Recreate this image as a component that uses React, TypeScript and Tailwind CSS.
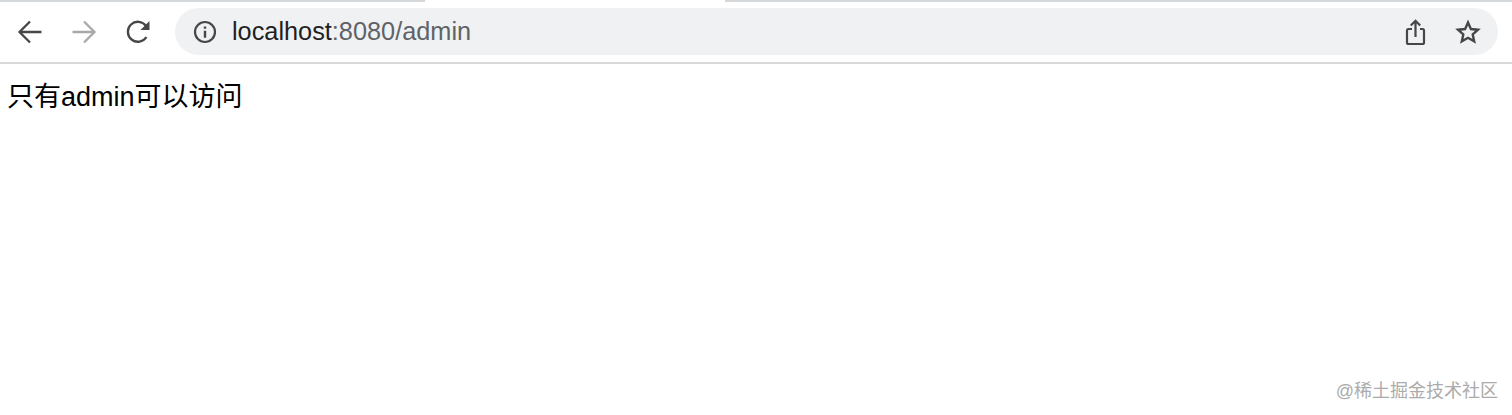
const FONT = "font-['Liberation_Sans','Noto_Sans_CJK_SC',sans-serif]";

export default function App() {
  return (
    <div className={`relative h-[415px] overflow-hidden bg-white ${FONT}`}>
      {/* tab strip remnant */}
      <div className="flex h-[2px]">
        <div className="w-[425px] bg-[#d6d9dc]" />
        <div className="w-[300px] bg-white" />
        <div className="flex-1 bg-[#d6d9dc]" />
      </div>

      {/* toolbar */}
      <div className="flex h-[62px] items-center border-b-[2px] border-[#d9d9d9] pb-[1px] pl-[17px] pr-[14px]">
        <svg width="26" height="26" viewBox="0 0 26 26" fill="none" stroke="#474747" strokeWidth="2.3">
          <path d="M24.5 13H3M13 2.5 2.5 13 13 23.5" />
        </svg>
        <svg className="ml-[28px]" width="26" height="26" viewBox="0 0 26 26" fill="none" stroke="#a9a9a9" strokeWidth="2.3">
          <path d="M1.5 13H23M13 2.5 23.5 13 13 23.5" />
        </svg>
        <svg className="ml-[29px]" width="26" height="26" viewBox="0 0 26 26" fill="none">
          <path d="M20.4 18A10 10 0 1 1 20 6.9" stroke="#474747" strokeWidth="2.3" />
          <path d="M23.5 2v9h-9z" fill="#474747" />
        </svg>

        {/* address bar */}
        <div className="ml-[23px] flex h-[47px] flex-1 items-center rounded-full bg-[#eff1f3] pl-[18px] pr-[17px]">
          <svg width="24" height="24" viewBox="0 0 24 24" fill="none">
            <circle cx="12" cy="12" r="10" stroke="#474747" strokeWidth="2.2" />
            <path d="M10.8 10.7h2.4v7h-2.4zM10.8 6.4h2.4v2.4h-2.4z" fill="#474747" />
          </svg>
          <div className="ml-[15px] text-[25.3px] leading-none text-[#5f6368]">
            <span className="text-[#1f1f1f]">localhost</span>:8080/admin
          </div>
          <div className="flex-1" />
          <svg width="22" height="28" viewBox="0 0 22 28" fill="none" stroke="#474747" strokeWidth="2.2">
            <path d="M7 11H3.5a1.5 1.5 0 0 0-1.5 1.500V24.500a1.500 1.500 0 0 0 1.500 1.500h14a1.500 1.500 0 0 0 1.500-1.500V12.500a1.500 1.500 0 0 0-1.500-1.500H15" />
            <path d="M10.500 19V3M5.800 7.500l4.700-4.700 4.700 4.700" />
          </svg>
          <svg className="ml-[28px]" width="26" height="26" viewBox="0 0 26 26" fill="none" stroke="#474747" strokeWidth="2.4" strokeLinejoin="miter">
            <path d="M13 3.500l2.900 6.500 7.100.7-5.300 4.700 1.500 7-6.200-3.600-6.200 3.600 1.500-7L3 10.700l7.100-.7z" />
          </svg>
        </div>
      </div>

      {/* page body */}
      <p className="pl-[7px] pt-[17px] text-[27px] leading-[32px] text-black">只有admin可以访问</p>

      {/* watermark */}
      <div className="absolute bottom-[12px] right-[14px] text-[18px] leading-[24px] text-[#ababab]">
        @稀土掘金技术社区
      </div>
    </div>
  );
}
